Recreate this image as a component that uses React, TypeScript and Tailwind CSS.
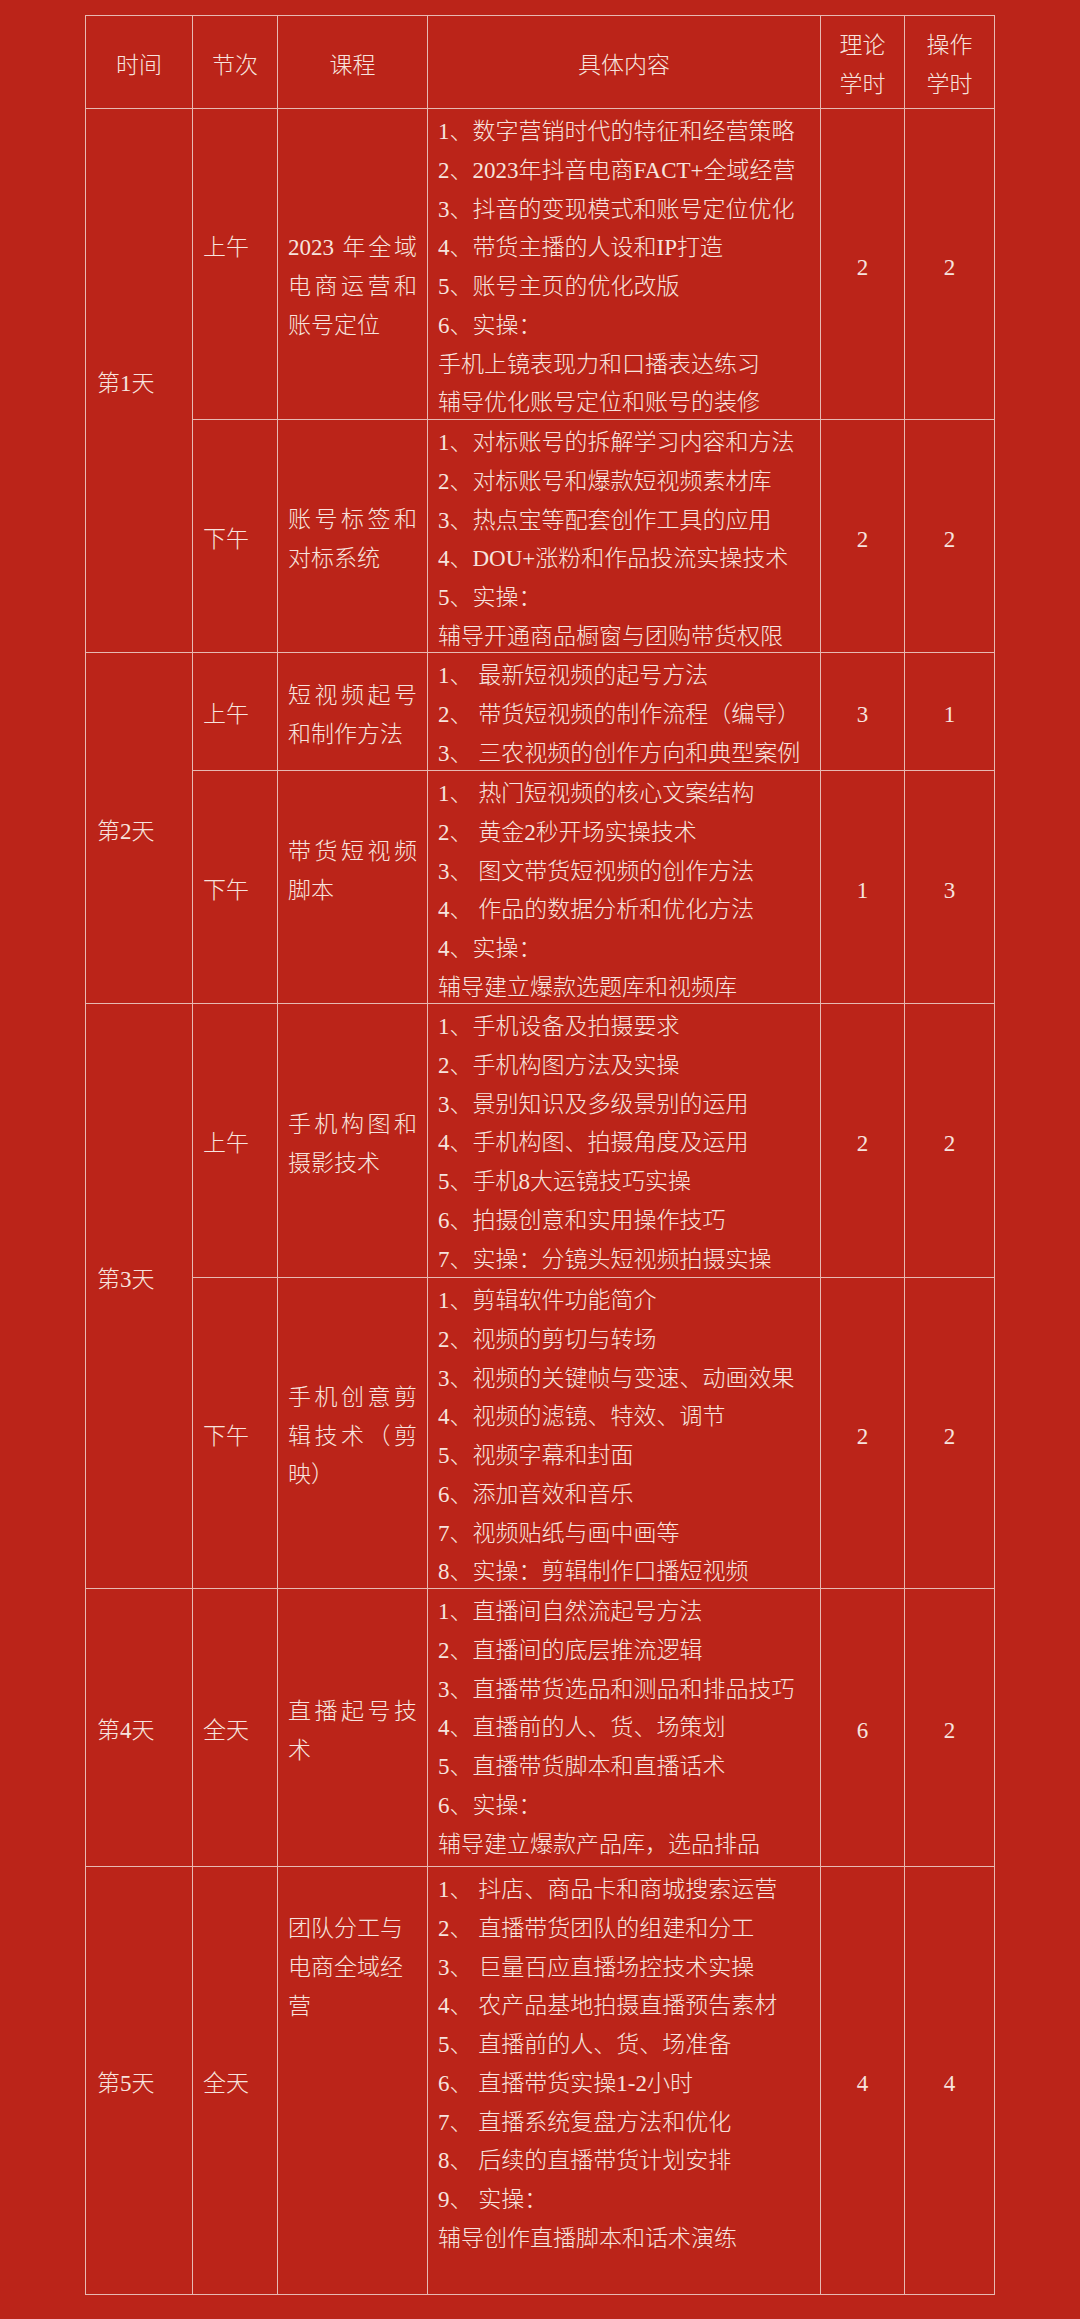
// 课程安排表：红底白字，五天课程，按天合并“时间”单元格
type Session = {
  slot: string[];
  course: string[];
  spread?: boolean; // 课程名是否两端对齐
  items: string[];
  theory: string;
  practice: string;
};

type Day = {
  label: string[];
  sessions: Session[];
};

const days: Day[] = [
  {
    label: ["第1天"],
    sessions: [
      {
        slot: ["上午", ""],
        course: ["", "2023 年全域", "电商运营和", "账号定位"],
        spread: true,
        items: [
          "1、数字营销时代的特征和经营策略",
          "2、2023年抖音电商FACT+全域经营",
          "3、抖音的变现模式和账号定位优化",
          "4、带货主播的人设和IP打造",
          "5、账号主页的优化改版",
          "6、实操：",
          "手机上镜表现力和口播表达练习",
          "辅导优化账号定位和账号的装修",
        ],
        theory: "2",
        practice: "2",
      },
      {
        slot: ["下午"],
        course: ["账号标签和", "对标系统"],
        spread: true,
        items: [
          "1、对标账号的拆解学习内容和方法",
          "2、对标账号和爆款短视频素材库",
          "3、热点宝等配套创作工具的应用",
          "4、DOU+涨粉和作品投流实操技术",
          "5、实操：",
          "辅导开通商品橱窗与团购带货权限",
        ],
        theory: "2",
        practice: "2",
      },
    ],
  },
  {
    label: ["第2天"],
    sessions: [
      {
        slot: ["上午"],
        course: ["短视频起号", "和制作方法"],
        spread: true,
        items: [
          "1、 最新短视频的起号方法",
          "2、 带货短视频的制作流程（编导）",
          "3、 三农视频的创作方向和典型案例",
        ],
        theory: "3",
        practice: "1",
      },
      {
        slot: ["下午"],
        course: ["带货短视频", "脚本", ""],
        spread: true,
        items: [
          "1、 热门短视频的核心文案结构",
          "2、 黄金2秒开场实操技术",
          "3、 图文带货短视频的创作方法",
          "4、 作品的数据分析和优化方法",
          "4、实操：",
          "辅导建立爆款选题库和视频库",
        ],
        theory: "1",
        practice: "3",
      },
    ],
  },
  {
    label: ["第3天", ""],
    sessions: [
      {
        slot: ["上午"],
        course: ["手机构图和", "摄影技术"],
        spread: true,
        items: [
          "1、手机设备及拍摄要求",
          "2、手机构图方法及实操",
          "3、景别知识及多级景别的运用",
          "4、手机构图、拍摄角度及运用",
          "5、手机8大运镜技巧实操",
          "6、拍摄创意和实用操作技巧",
          "7、实操：分镜头短视频拍摄实操",
        ],
        theory: "2",
        practice: "2",
      },
      {
        slot: ["下午"],
        course: ["手机创意剪", "辑技术（剪", "映）"],
        spread: true,
        items: [
          "1、剪辑软件功能简介",
          "2、视频的剪切与转场",
          "3、视频的关键帧与变速、动画效果",
          "4、视频的滤镜、特效、调节",
          "5、视频字幕和封面",
          "6、添加音效和音乐",
          "7、视频贴纸与画中画等",
          "8、实操：剪辑制作口播短视频",
        ],
        theory: "2",
        practice: "2",
      },
    ],
  },
  {
    label: ["第4天"],
    sessions: [
      {
        slot: ["全天"],
        course: ["直播起号技", "术"],
        spread: true,
        items: [
          "1、直播间自然流起号方法",
          "2、直播间的底层推流逻辑",
          "3、直播带货选品和测品和排品技巧",
          "4、直播前的人、货、场策划",
          "5、直播带货脚本和直播话术",
          "6、实操：",
          "辅导建立爆款产品库，选品排品",
        ],
        theory: "6",
        practice: "2",
      },
    ],
  },
  {
    label: ["第5天"],
    sessions: [
      {
        slot: ["全天"],
        course: ["团队分工与", "电商全域经", "营", "", "", "", "", "", ""],
        items: [
          "1、 抖店、商品卡和商城搜索运营",
          "2、 直播带货团队的组建和分工",
          "3、 巨量百应直播场控技术实操",
          "4、 农产品基地拍摄直播预告素材",
          "5、 直播前的人、货、场准备",
          "6、 直播带货实操1-2小时",
          "7、 直播系统复盘方法和优化",
          "8、 后续的直播带货计划安排",
          "9、 实操：",
          "辅导创作直播脚本和话术演练",
        ],
        theory: "4",
        practice: "4",
      },
    ],
  },
];

function Lines({ lines }: { lines: string[] }) {
  return (
    <>
      {lines.map((l, i) => (
        <div key={i} className="whitespace-pre">
          {l === "" ? "\u00a0" : l}
        </div>
      ))}
    </>
  );
}

// 把一行拆成可分散对齐的小块：连续的数字/字母算一块，空格并到前一块
function tokens(line: string) {
  const out: string[] = [];
  for (const ch of Array.from(line)) {
    const prev = out[out.length - 1];
    if (prev !== undefined && (ch === " " || (/[0-9A-Za-z]/.test(ch) && /[0-9A-Za-z]$/.test(prev)))) {
      out[out.length - 1] = prev + ch;
    } else {
      out.push(ch);
    }
  }
  return out;
}

// 课程名：除最后一行文字外都两端对齐
function CourseLines({ lines, spread }: { lines: string[]; spread?: boolean }) {
  let lastText = -1;
  lines.forEach((l, i) => {
    if (l !== "") lastText = i;
  });
  return (
    <>
      {lines.map((l, i) =>
        spread && i < lastText && l !== "" ? (
          <div key={i} className="flex justify-between whitespace-pre">
            {tokens(l).map((t, j) => (
              <span key={j}>{t}</span>
            ))}
          </div>
        ) : (
          <div key={i} className="whitespace-pre">
            {l === "" ? "\u00a0" : l}
          </div>
        )
      )}
    </>
  );
}

const cell = "bg-[#bb2419]";
const centered = `${cell} flex flex-col items-center justify-center pt-[8px] text-center`;

export default function App() {
  return (
    <div className="min-h-[2319px] w-full bg-[#bb2419] pt-[15px] [font-family:'Liberation_Serif','Noto_Sans_CJK_SC',serif] text-[23px] leading-[38.75px] font-light text-[#f7e3de]">
      <div className="mx-auto grid w-[910px] grid-cols-[106px_84px_149px_392px_83px_89px] grid-rows-[92px_310px_232px_117px_232px_273px_310px_277px_427px] gap-px bg-[#e7b9b2] p-px">
        {/* 表头 */}
        <div className={centered}>时间</div>
        <div className={centered}>节次</div>
        <div className={centered}>课程</div>
        <div className={centered}>具体内容</div>
        <div className={centered}>
          <Lines lines={["理论", "学时"]} />
        </div>
        <div className={centered}>
          <Lines lines={["操作", "学时"]} />
        </div>

        {days.map((day) => (
          <DayRows key={day.label[0]} day={day} />
        ))}
      </div>
    </div>
  );
}

function DayRows({ day }: { day: Day }) {
  return (
    <>
      <div
        className={
          day.sessions.length > 1
            ? `${cell} row-span-2 flex flex-col justify-center pt-[8px] pl-[11px]`
            : `${cell} flex flex-col justify-center pt-[8px] pl-[11px]`
        }
      >
        <Lines lines={day.label} />
      </div>
      {day.sessions.map((s, i) => (
        <SessionRow key={i} s={s} />
      ))}
    </>
  );
}

function SessionRow({ s }: { s: Session }) {
  return (
    <>
      <div className={`${cell} flex flex-col justify-center pt-[8px] pl-[10px]`}>
        <Lines lines={s.slot} />
      </div>
      <div className={`${cell} flex flex-col justify-center pt-[8px] px-[10px]`}>
        <CourseLines lines={s.course} spread={s.spread} />
      </div>
      <div className={`${cell} pt-[4px] pl-[10px]`}>
        <Lines lines={s.items} />
      </div>
      <div className={centered}>{s.theory}</div>
      <div className={centered}>{s.practice}</div>
    </>
  );
}
